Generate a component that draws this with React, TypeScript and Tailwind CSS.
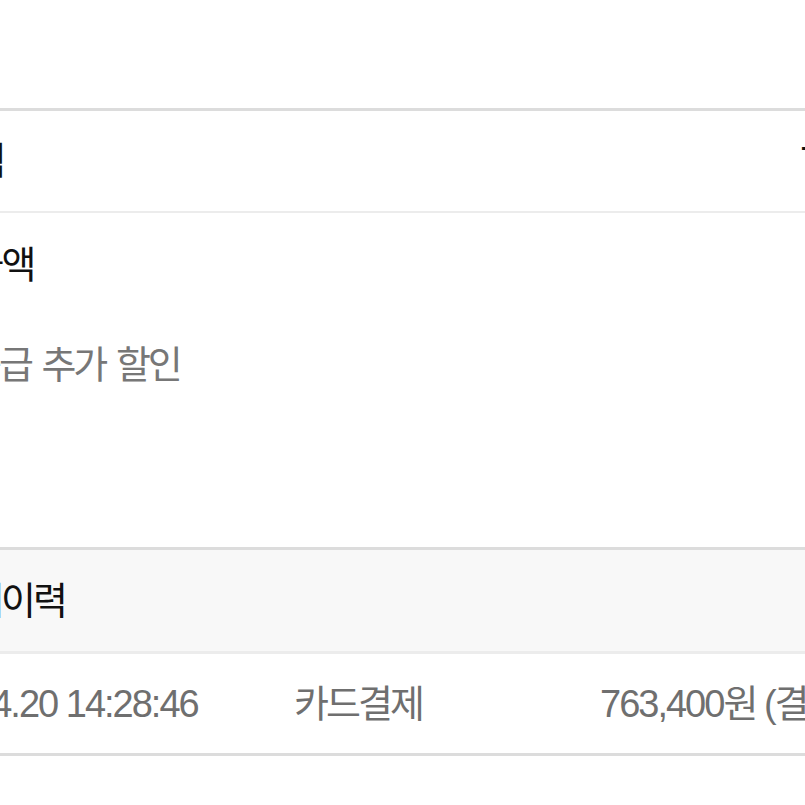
import React from 'react';

// Hangul and digits get their own letter-spacing to match the narrow system font of the capture
const ko = 'tracking-[-3px]';
const num = 'tracking-[-2px]';

function Gap() {
  return <span className="tracking-normal"> </span>;
}

export default function App() {
  return (
    <div className="w-[805px] h-[805px] overflow-hidden bg-white text-[38px] leading-none whitespace-nowrap font-['Liberation_Sans','Noto_Sans_CJK_KR',sans-serif]">
      <div className="pt-[108px]">
        {/* 상품금액 */}
        <div className="border-t-[3px] border-b-2 border-t-[#dcdcdc] border-b-[#ececec]">
          <div className="flex items-center h-[100px] -ml-[125px] text-[#111111]">
            <span className={`w-[925px] shrink-0 ${ko}`}>상품금액</span>
            <span className={num}>798,000원</span>
          </div>
        </div>

        {/* 할인금액 */}
        <div className="border-b-[3px] border-[#dcdcdc] pb-[134px]">
          <div className="flex items-center h-[104px] -ml-[134px] text-[#111111]">
            <span className={ko}>총 할인금액</span>
          </div>
          <div className="flex items-center h-[96px] -ml-[97px] text-[#777777]">
            <span className={ko}>
              회원등급<Gap />추가<Gap />할인
            </span>
          </div>
        </div>

        {/* 결제이력 */}
        <div className="bg-[#f8f8f8] border-b-[3px] border-[#ececec]">
          <div className="flex items-center h-[101px] -ml-[63px] text-[#111111]">
            <span className={ko}>결제이력</span>
          </div>
        </div>

        <div className="border-b-[3px] border-[#dcdcdc]">
          <div className="grid grid-cols-[407px_306px_auto] items-center h-[99px] -ml-[113px] text-[#6f6f6f]">
            <span className={num}>2024.04.20 14:28:46</span>
            <span className={ko}>카드결제</span>
            <span>
              <span className={num}>763,400</span>
              <span className={ko}>원</span>
              <span className={num}> (</span>
              <span className={ko}>결제완료</span>
              <span className={num}>)</span>
            </span>
          </div>
        </div>
      </div>
    </div>
  );
}
